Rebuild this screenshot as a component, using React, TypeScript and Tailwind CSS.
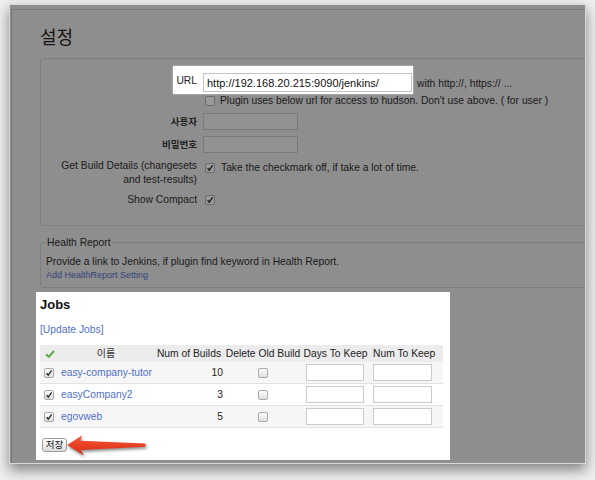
import React from "react";

function Box({ checked, dark }: { checked?: boolean; dark?: boolean }) {
  return (
    <span
      className={
        dark
          ? "inline-flex h-[10px] w-[10px] shrink-0 items-center justify-center rounded-[2px] border border-[#6c6c6c] bg-[#9a9a9a]"
          : "inline-flex h-[10px] w-[10px] shrink-0 items-center justify-center rounded-[2px] border border-[#a9a9a9] bg-linear-to-b from-white to-[#dedede]"
      }
    >
      {checked && (
        <svg viewBox="0 0 10 10" className="h-[8px] w-[8px]">
          <path d="M2 5.3 L4.1 7.6 L8.3 1.8" fill="none" stroke={dark ? "#1a1a1a" : "#2a2a2a"} strokeWidth="1.7" />
        </svg>
      )}
    </span>
  );
}

const jobs = [
  { name: "easy-company-tutor", n: 10, bg: "bg-[#f6f6f7]" },
  { name: "easyCompany2", n: 3, bg: "bg-white" },
  { name: "egovweb", n: 5, bg: "bg-[#f6f6f7]" },
];

export default function App() {
  return (
    <div className="h-[480px] w-[595px] overflow-hidden bg-[#eeeeee] pl-[9px] pt-[4px] font-['Liberation_Sans','Noto_Sans_CJK_KR',sans-serif] text-[10.3px] leading-[13px] text-[#1a1a1a]">
      <div className="flex h-[460px] w-[577px] flex-col border border-[#d8d8d8] bg-[#8e8e8e] pl-[1px] pt-[4px] shadow-[0_6px_12px_rgba(0,0,0,0.45)]">
        <div className="relative flex-1 overflow-hidden border-l border-t border-[#7a7a7a] pl-[28px]">
          <h1 className="mt-[14px] h-[24px] font-['Noto_Sans_CJK_KR',sans-serif] text-[18px] leading-[24px] font-normal text-[#141414]">
            설정
          </h1>

          {/* main settings box */}
          <div className="mt-[10px] w-[560px] rounded-[3px] border border-[#7e7e7e] pb-[18px] pt-[7px]">
            {/* URL row */}
            <div className="flex items-center">
              <div className="w-[132px]" />
              <div className="flex h-[28px] w-[240px] items-end bg-white pb-[2px] shadow-[0_0_2px_rgba(255,255,255,0.6)]">
                <span className="mb-[5px] w-[24px] text-right text-[#222]">URL</span>
                <input
                  readOnly
                  value="http://192.168.20.215:9090/jenkins/"
                  className="ml-[6px] h-[19px] w-[209px] border border-[#c4c4c4] bg-white px-[3px] text-[11px] text-[#111] outline-none"
                />
              </div>
              <span className="ml-[4px] mt-[6px]">with http://, https:// ...</span>
            </div>
            {/* plugin row */}
            <div className="flex h-[13px] items-center pl-[164px]">
              <Box dark />
              <span className="ml-[5px]">Plugin uses below url for access to hudson. Don't use above. ( for user )</span>
            </div>
            {/* user */}
            <div className="mt-[6px] flex items-center">
              <span className="w-[156px] text-right text-[9.5px] font-bold text-[#222]">사용자</span>
              <div className="ml-[6px] h-[17px] w-[95px] border border-[#7a7a7a] bg-[#919191]" />
            </div>
            <div className="mt-[6px] flex items-center">
              <span className="w-[156px] text-right text-[9.5px] font-bold text-[#222]">비밀번호</span>
              <div className="ml-[6px] h-[17px] w-[95px] border border-[#7a7a7a] bg-[#919191]" />
            </div>
            {/* build details */}
            <div className="mt-[6px] flex items-start">
              <span className="w-[156px] text-right leading-[14px]">
                Get Build Details (changesets
                <br />
                and test-results)
              </span>
              <span className="ml-[8px] mt-[2px] flex items-center">
                <Box dark checked />
                <span className="ml-[6px] leading-[14px]">Take the checkmark off, if take a lot of time.</span>
              </span>
            </div>
            <div className="mt-[6px] flex items-center">
              <span className="w-[156px] text-right leading-[14px]">Show Compact</span>
              <span className="ml-[8px] flex items-center">
                <Box dark checked />
              </span>
            </div>
          </div>

          {/* health report */}
          <fieldset className="mt-[10px] w-[560px] rounded-[3px] border border-[#7e7e7e] pb-[6px] pl-[5px]">
            <legend className="px-[1px] leading-[13px]">Health Report</legend>
            <div className="mt-[7px] leading-[12px]">Provide a link to Jenkins, if plugin find keyword in Health Report.</div>
            <div className="mt-[1px] text-[9px] leading-[12px] text-[#33447a]">Add HealthReport Setting</div>
          </fieldset>

          {/* jobs panel */}
          <div className="relative ml-[-4px] mt-[4px] h-[168px] w-[414px] bg-white pl-[4px] pt-[5px] text-[#222]">
            <div className="text-[13px] font-bold leading-[16px] text-[#111]">Jobs</div>
            <div className="mt-[10px] leading-[13px] text-[#4f71c6]">[Update Jobs]</div>

            <div className="mt-[9px] w-[403px]">
              <div className="grid h-[17px] grid-cols-[18px_96px_70px_78px_67px_74px] items-center bg-[#ececec] text-[#222]">
                <span className="pl-[5px]">
                  <svg viewBox="0 0 10 8" className="h-[8px] w-[10px]">
                    <path d="M1 4.2 L3.8 6.8 L9 1" fill="none" stroke="#5aa642" strokeWidth="2" />
                  </svg>
                </span>
                <span className="text-center text-[10px] text-[#333]">이름</span>
                <span className="text-center">Num of Builds</span>
                <span className="text-center">Delete Old Build</span>
                <span className="text-center">Days To Keep</span>
                <span className="pl-[4px]">Num To Keep</span>
              </div>
              {jobs.map((j) => (
                <div
                  key={j.name}
                  className={`grid h-[22px] grid-cols-[18px_96px_70px_78px_67px_74px] items-center border-b border-[#e2e2e2] ${j.bg}`}
                >
                  <span className="flex pl-[4px]">
                    <Box checked />
                  </span>
                  <span className="pl-[3px] text-[#4f71c6]">{j.name}</span>
                  <span className="pr-[1px] text-right text-[#222]">{j.n}</span>
                  <span className="flex justify-center">
                    <Box />
                  </span>
                  <span className="pl-[4px]">
                    <div className="h-[17px] w-[58px] border border-[#cacaca] bg-white" />
                  </span>
                  <span className="pl-[4px]">
                    <div className="h-[17px] w-[59px] border border-[#cacaca] bg-white" />
                  </span>
                </div>
              ))}
            </div>

            <button className="ml-[2px] mt-[10px] flex h-[14px] w-[25px] items-center justify-center rounded-[3px] border border-[#9d9d9d] bg-linear-to-b from-white to-[#dadada] font-['Noto_Sans_CJK_KR',sans-serif] text-[9.5px] leading-none text-[#111]">
              저장
            </button>

            <svg
              viewBox="0 0 95 28"
              className="absolute left-[24px] top-[140px] h-[28px] w-[95px] drop-shadow-[1px_2px_1.5px_rgba(0,0,0,0.45)]"
            >
              <defs>
                <linearGradient id="ar" x1="0" y1="0" x2="0" y2="1">
                  <stop offset="0" stopColor="#f45a3a" />
                  <stop offset="1" stopColor="#d8260f" />
                </linearGradient>
              </defs>
              <path
                d="M7 13 L22 3.5 L20.5 8.8 L85 11.4 Q86.5 13 85 14.8 L20.5 18 L24 23.5 Z"
                fill="url(#ar)"
              />
            </svg>
          </div>
        </div>
      </div>
    </div>
  );
}
